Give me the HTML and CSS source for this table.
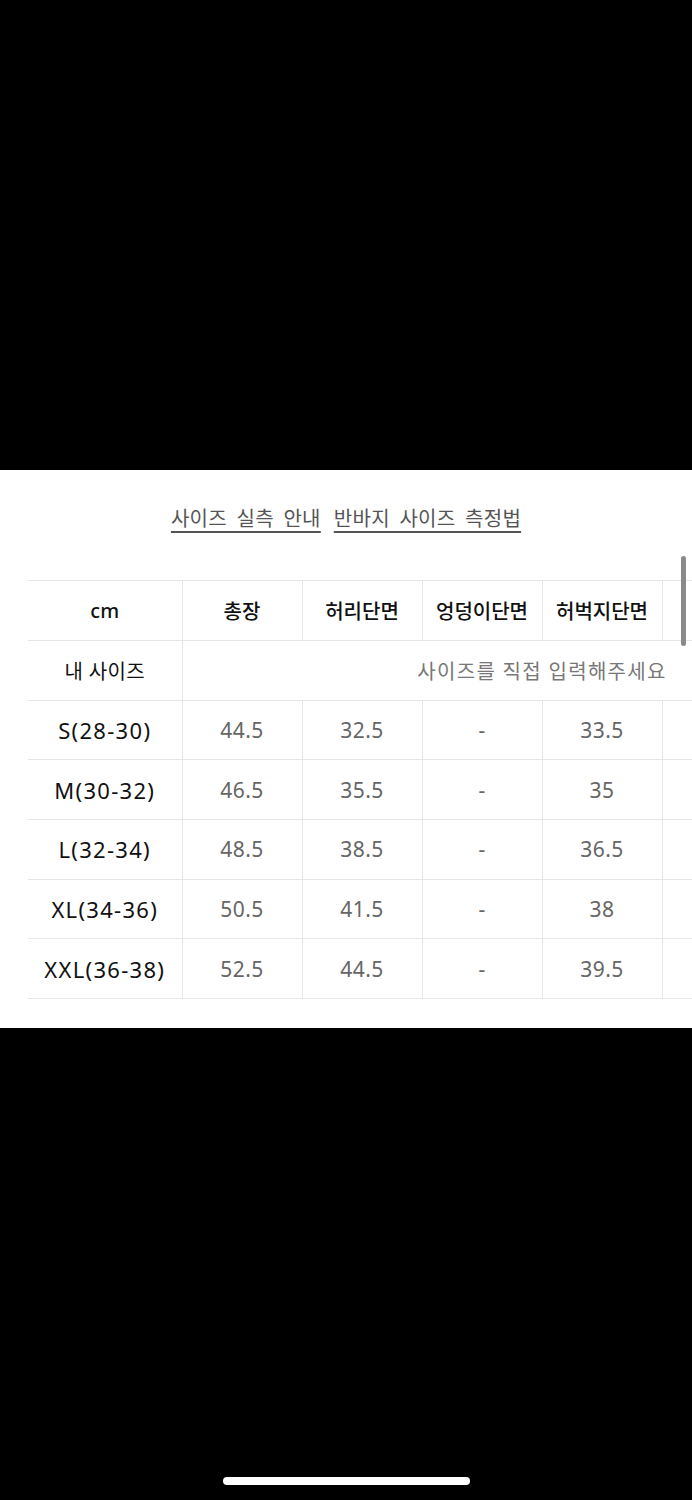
FILE: index.html
```html
<!DOCTYPE html>
<html lang="ko">
<head>
<meta charset="utf-8">
<title>사이즈 실측 안내</title>
<link rel="stylesheet" href="styles.css">
</head>
<body>
<div class="screen">
  <div class="top-black"></div>
  <section class="panel">
    <nav class="links">
      <a class="link">사이즈 실측 안내</a>
      <a class="link">반바지 사이즈 측정법</a>
    </nav>
    <div class="table-area">
      <div class="table-clip">
        <table class="size-table">
          <colgroup>
            <col class="c-first">
            <col class="c-val"><col class="c-val"><col class="c-val"><col class="c-val"><col class="c-val"><col class="c-val">
          </colgroup>
          <thead>
            <tr class="head">
              <th class="first">cm</th>
              <th>총장</th>
              <th>허리단면</th>
              <th>엉덩이단면</th>
              <th>허벅지단면</th>
              <th></th>
              <th></th>
            </tr>
          </thead>
          <tbody>
            <tr>
              <td class="first label">내 사이즈</td>
              <td class="mine" colspan="6">사이즈를 직접 입력해주세요</td>
            </tr>
            <tr>
              <td class="first size">S(28-30)</td>
              <td>44.5</td><td>32.5</td><td>-</td><td>33.5</td><td></td><td></td>
            </tr>
            <tr>
              <td class="first size">M(30-32)</td>
              <td>46.5</td><td>35.5</td><td>-</td><td>35</td><td></td><td></td>
            </tr>
            <tr>
              <td class="first size">L(32-34)</td>
              <td>48.5</td><td>38.5</td><td>-</td><td>36.5</td><td></td><td></td>
            </tr>
            <tr>
              <td class="first size">XL(34-36)</td>
              <td>50.5</td><td>41.5</td><td>-</td><td>38</td><td></td><td></td>
            </tr>
            <tr>
              <td class="first size">XXL(36-38)</td>
              <td>52.5</td><td>44.5</td><td>-</td><td>39.5</td><td></td><td></td>
            </tr>
          </tbody>
        </table>
      </div>
      <div class="scrollbar"></div>
    </div>
  </section>
  <div class="bottom-black">
    <div class="home-indicator"></div>
  </div>
</div>
</body>
</html>
```

FILE: styles.css
```css
html, body {
  margin: 0;
  padding: 0;
  background: #000;
}

.screen {
  width: 692px;
  height: 1500px;
  display: flex;
  flex-direction: column;
  background: #000;
  font-family: "Noto Sans", "Noto Sans CJK KR", sans-serif;
}

.top-black {
  height: 470px;
  flex: none;
}

.panel {
  height: 558px;
  flex: none;
  background: #fff;
  box-sizing: border-box;
  padding-top: 34px;
}

.links {
  display: flex;
  justify-content: center;
  gap: 13px;
  height: 30px;
  align-items: center;
}

.link {
  font-size: 20px;
  color: #555;
  text-decoration: underline;
  text-decoration-color: #555;
  text-decoration-thickness: 1.5px;
  text-underline-offset: 5px;
  word-spacing: 4px;
  letter-spacing: 0.3px;
  line-height: 30px;
}

.table-area {
  position: relative;
  margin-top: 46px;
}

.table-clip {
  margin-left: 28px;
  width: 664px;
  overflow: hidden;
}

.size-table {
  border-collapse: collapse;
  table-layout: fixed;
  width: 874px;
}

.c-first { width: 154px; }
.c-val { width: 120px; }

.size-table th,
.size-table td {
  padding: 0;
  text-align: center;
  border: 1px solid #e6e6e6;
  white-space: nowrap;
}

.size-table th {
  height: 59px;
  font-size: 20px;
  font-weight: 500;
  color: #111;
}

.size-table td {
  height: 58.7px;
  font-size: 21px;
  color: #666;
  letter-spacing: 0.4px;
}

.size-table tr > :first-child {
  border-left: none;
}

.size-table td.first {
  color: #111;
  font-size: 22px;
  letter-spacing: 1.3px;
}

.size-table td.label {
  font-size: 20px;
  letter-spacing: 0.3px;
}

.size-table td.mine {
  font-size: 20px;
  color: #777;
  letter-spacing: 1.3px;
}

.scrollbar {
  position: absolute;
  top: -24px;
  right: 6px;
  width: 5px;
  height: 90px;
  border-radius: 3px;
  background: #8a8a8a;
}

.bottom-black {
  flex: 1;
  display: flex;
  justify-content: center;
  align-items: flex-end;
  padding-bottom: 15px;
}

.home-indicator {
  width: 247px;
  height: 8px;
  border-radius: 4px;
  background: #fff;
}
```
